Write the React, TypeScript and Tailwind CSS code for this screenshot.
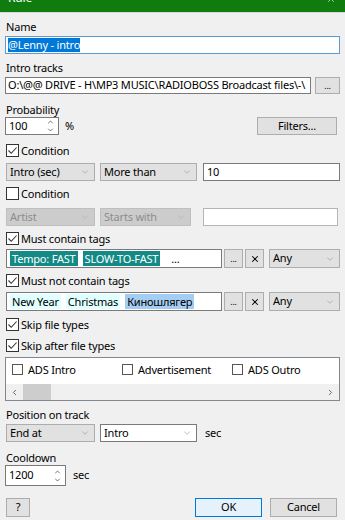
import { ChevronDown, ChevronUp, ChevronLeft, ChevronRight, X } from "lucide-react";

const font = { fontFamily: '"Segoe UI", "Noto Sans", "Liberation Sans", sans-serif' };

function Check({ on }: { on?: boolean }) {
  return (
    <span className="flex h-[13px] w-[13px] shrink-0 items-center justify-center border border-[#333] bg-white">
      {on && (
        <svg width="11" height="11" viewBox="0 0 11 11">
          <path d="M1.5 5.5 L4.2 8.3 L9.6 2.5" fill="none" stroke="#333" strokeWidth="1.1" />
        </svg>
      )}
    </span>
  );
}

function CheckRow({ label, on, mt }: { label: string; on?: boolean; mt: string }) {
  return (
    <div className={`${mt} flex h-[13px] items-center gap-[2px] pl-[6px] text-black`}>
      <Check on={on} />
      <span className="leading-none">{label}</span>
    </div>
  );
}

function Label({ text, mt }: { text: string; mt: string }) {
  return <div className={`${mt} h-[13px] pl-[6px] leading-[13px] text-black`}>{text}</div>;
}

function Combo({ text, w, white, disabled }: { text: string; w: string; white?: boolean; disabled?: boolean }) {
  const tone = disabled
    ? "bg-[#cccccc] border-[#bfbfbf] text-[#8d8d8d]"
    : white
    ? "bg-white border-[#7a7a7a] text-black"
    : "bg-[#e1e1e1] border-[#adadad] text-black";
  return (
    <div className={`${w} ${tone} flex h-full items-center justify-between border pl-[3px] pr-[4px]`}>
      <span>{text}</span>
      <ChevronDown className="h-[10px] w-[10px]" strokeWidth={1.3} color={disabled ? "#a6a6a6" : "#8a8a8a"} />
    </div>
  );
}

function Spin({ value, w }: { value: string; w: string }) {
  return (
    <div className={`${w} flex h-full items-center justify-between border border-[#7a7a7a] bg-white pl-[3px] pr-[3px]`}>
      <span>{value}</span>
      <span className="flex flex-col items-center leading-none">
        <ChevronUp className="h-[8px] w-[9px]" strokeWidth={2} color="#333" />
        <ChevronDown className="h-[8px] w-[9px]" strokeWidth={2} color="#333" />
      </span>
    </div>
  );
}

function Btn({ children, w, blue }: { children: React.ReactNode; w: string; blue?: boolean }) {
  return (
    <div
      className={`${w} flex h-full items-center justify-center border text-black ${
        blue ? "border-[#0078d7] bg-[#e5f1fb]" : "border-[#adadad] bg-[#e1e1e1]"
      }`}
    >
      {children}
    </div>
  );
}

function TagRow({ tags, mt }: { tags: { t: string; c: string }[]; mt: string }) {
  return (
    <div className={`${mt} flex h-[19px] pl-[6px]`}>
      <div className="flex w-[216px] items-center gap-[5px] overflow-hidden whitespace-nowrap border border-[#7a7a7a] bg-white pl-[3px]">
        {tags.map((g) => (
          <span key={g.t} className={`${g.c} px-[2px] leading-[15px]`}>
            {g.t}
          </span>
        ))}
      </div>
      <div className="ml-[2px] w-[19px]">
        <Btn w="w-[19px]">
          <span className="text-[9px]">...</span>
        </Btn>
      </div>
      <div className="ml-[2px] w-[19px]">
        <Btn w="w-[19px]">
          <X className="h-[10px] w-[10px]" strokeWidth={2.5} />
        </Btn>
      </div>
      <div className="ml-[5px]">
        <Combo text="Any" w="w-[71px]" />
      </div>
    </div>
  );
}

function ListItem({ label }: { label: string }) {
  return (
    <div className="flex items-center">
      <span className="h-[11px] w-[11px] shrink-0 border border-[#555] bg-white" />
      <span className="ml-[5px] leading-none">{label}</span>
    </div>
  );
}

export default function App() {
  return (
    <div
      className="h-[520px] w-[345px] overflow-hidden bg-[#f0f0f0] text-[11px] tracking-[-0.2px] text-black"
      style={font}
    >
      <div className="flex h-[12px] items-start justify-between overflow-hidden bg-[#107c10] px-[8px] text-[12px] text-white">
        <span className="-mt-[8px] leading-none">Rule</span>
        <X className="-mt-[6px] mr-[1px] h-[10px] w-[10px]" strokeWidth={1.5} />
      </div>
      <div className="h-px bg-[#d9d9d9]" />

      <Label text="Name" mt="mt-[7px]" />
      <div className="mt-[3px] flex h-[18px] px-[5px]">
        <div className="flex flex-1 items-center border border-[#5b9bd5] bg-white pl-[2px]">
          <span className="bg-[#0078d7] leading-[14px] text-white">@Lenny - intro</span>
        </div>
      </div>

      <Label text="Intro tracks" mt="mt-[7px]" />
      <div className="mt-[3px] flex h-[17px] pl-[5px]">
        <div className="flex w-[306px] items-center overflow-hidden whitespace-nowrap border border-[#7a7a7a] bg-white pl-[2px]">
          O:\@@ DRIVE - H\MP3 MUSIC\RADIOBOSS Broadcast files\-\
        </div>
        <div className="ml-[4px] w-[25px]">
          <Btn w="w-[25px]">
            <span className="text-[9px]">...</span>
          </Btn>
        </div>
      </div>

      <Label text="Probability" mt="mt-[9px]" />
      <div className="mt-[1px] flex h-[18px] items-center pl-[5px]">
        <Spin value="100" w="w-[54px]" />
        <span className="ml-[6px]">%</span>
        <div className="ml-auto mr-[8px] h-full">
          <Btn w="w-[80px]">Filters...</Btn>
        </div>
      </div>

      <CheckRow label="Condition" on mt="mt-[9px]" />
      <div className="mt-[6px] flex h-[18px] gap-[5px] pl-[6px]">
        <Combo text="Intro (sec)" w="w-[89px]" />
        <Combo text="More than" w="w-[97px]" />
        <div className="ml-[1px] flex w-[137px] items-center border border-[#7a7a7a] bg-white pl-[3px]">10</div>
      </div>

      <CheckRow label="Condition" mt="mt-[6px]" />
      <div className="mt-[8px] flex h-[18px] gap-[5px] pl-[6px]">
        <Combo text="Artist" w="w-[89px]" disabled />
        <Combo text="Starts with" w="w-[91px]" disabled />
        <div className="ml-[7px] w-[135px] border border-[#b5b5b5] bg-white" />
      </div>

      <CheckRow label="Must contain tags" on mt="mt-[6px]" />
      <TagRow
        mt="mt-[4px]"
        tags={[
          { t: "Tempo: FAST", c: "bg-[#138a85] text-white" },
          { t: "SLOW-TO-FAST", c: "bg-[#138a85] text-white" },
          { t: "...", c: "ml-[4px] text-black" },
        ]}
      />

      <CheckRow label="Must not contain tags" on mt="mt-[6px]" />
      <TagRow
        mt="mt-[5px]"
        tags={[
          { t: "New Year", c: "bg-[#e0ffff] text-black" },
          { t: "Christmas", c: "bg-[#e0ffff] text-black" },
          { t: "Киношлягер", c: "bg-[#a3cdf2] text-black" },
        ]}
      />

      <CheckRow label="Skip file types" on mt="mt-[7px]" />
      <CheckRow label="Skip after file types" on mt="mt-[8px]" />

      <div className="mx-[5px] mt-[5px] flex h-[44px] flex-col border border-[#828790] bg-white">
        <div className="mt-[5px] grid h-[12px] grid-cols-[110px_110px_110px] pl-[6px]">
          <ListItem label="ADS Intro" />
          <ListItem label="Advertisement" />
          <ListItem label="ADS Outro" />
        </div>
        <div className="mt-auto flex h-[16px] items-center bg-[#f0f0f0]">
          <ChevronLeft className="ml-[4px] h-[9px] w-[9px]" strokeWidth={2.5} color="#606060" />
          <span className="ml-[4px] h-full w-[28px] bg-[#cdcdcd]" />
          <ChevronRight className="ml-auto mr-[4px] h-[9px] w-[9px]" strokeWidth={2.5} color="#606060" />
        </div>
      </div>

      <Label text="Position on track" mt="mt-[7px]" />
      <div className="mt-[3px] flex h-[18px] items-center pl-[6px]">
        <Combo text="End at" w="w-[89px]" />
        <div className="ml-[5px] h-full">
          <Combo text="Intro" w="w-[97px]" white />
        </div>
        <span className="ml-[8px]">sec</span>
      </div>

      <Label text="Cooldown" mt="mt-[9px]" />
      <div className="mt-[1px] flex h-[21px] items-center pl-[5px]">
        <Spin value="1200" w="w-[61px]" />
        <span className="ml-[7px]">sec</span>
      </div>

      <div className="mt-[12px] flex h-[19px] pl-[6px] pr-[8px]">
        <Btn w="w-[24px]">?</Btn>
        <div className="ml-auto h-full">
          <Btn w="w-[67px]" blue>
            OK
          </Btn>
        </div>
        <div className="ml-[8px] h-full">
          <Btn w="w-[67px]">Cancel</Btn>
        </div>
      </div>
    </div>
  );
}
